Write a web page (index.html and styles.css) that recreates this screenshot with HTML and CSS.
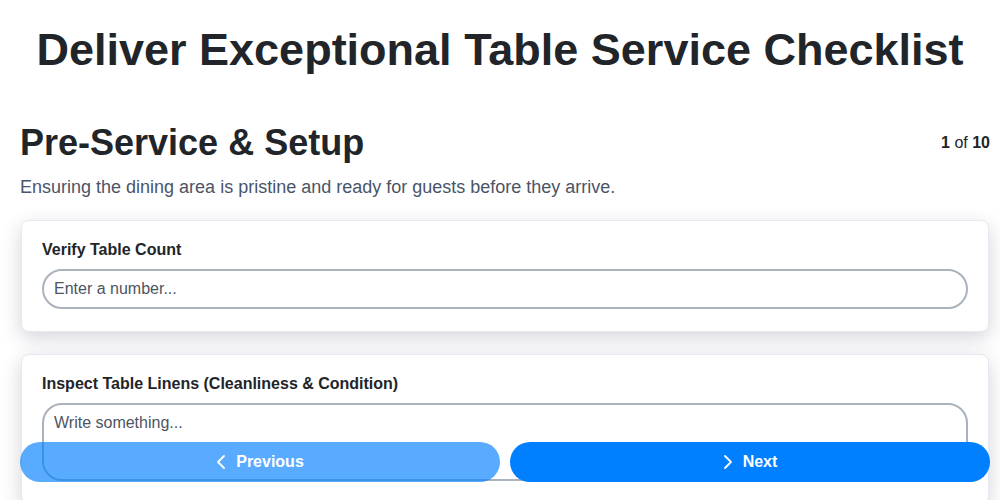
FILE: index.html
```html
<!DOCTYPE html>
<html lang="en">
<head>
<meta charset="utf-8">
<title>Deliver Exceptional Table Service Checklist</title>
<link rel="stylesheet" href="styles.css">
</head>
<body>
<header class="header">
  <h1 class="title">Deliver Exceptional Table Service Checklist</h1>
</header>
<main class="page">
  <div class="section-head">
    <h2 class="section-title">Pre-Service &amp; Setup</h2>
    <div class="progress"><b>1</b> of <b>10</b></div>
  </div>
  <p class="section-desc">Ensuring the dining area is pristine and ready for guests before they arrive.</p>
  <div class="cards">
    <div class="card">
      <label class="field-label">Verify Table Count</label>
      <input class="field-input" type="text" placeholder="Enter a number...">
    </div>
    <div class="card">
      <label class="field-label">Inspect Table Linens (Cleanliness &amp; Condition)</label>
      <textarea class="field-textarea" placeholder="Write something..."></textarea>
    </div>
  </div>
</main>
<div class="nav">
  <button class="btn btn-prev" type="button">
    <svg class="chev" width="10" height="16" viewBox="0 0 10 16"><path d="M8 2 L2 8 L8 14" fill="none" stroke="currentColor" stroke-width="1.8" stroke-linecap="round" stroke-linejoin="round"/></svg>
    <span>Previous</span>
  </button>
  <button class="btn btn-next" type="button">
    <svg class="chev" width="10" height="16" viewBox="0 0 10 16"><path d="M2 2 L8 8 L2 14" fill="none" stroke="currentColor" stroke-width="1.8" stroke-linecap="round" stroke-linejoin="round"/></svg>
    <span>Next</span>
  </button>
</div>
</body>
</html>
```
FILE: styles.css
```css
* { box-sizing: border-box; }
html { scrollbar-width: none; }
html, body { margin: 0; padding: 0; background: #fff; }
body {
  font-family: "Liberation Sans", Arial, sans-serif;
  color: #212529;
}
.header {
  padding: 24px 20px 0;
}
.title {
  margin: 0 0 45px;
  font-size: 45px;
  line-height: 52px;
  font-weight: 700;
  text-align: center;
  color: #212529;
}
.page {
  padding: 0 10px 120px 20px;
}
.section-head {
  display: flex;
  justify-content: space-between;
  align-items: center;
}
.section-title {
  margin: 0;
  font-size: 36px;
  line-height: 44px;
  font-weight: 700;
  color: #212529;
}
.progress {
  font-size: 16px;
  color: #212529;
}
.section-desc {
  margin: 10px 0 21px;
  font-size: 18px;
  line-height: 24px;
  color: #4a5568;
}
.cards {
  display: flex;
  flex-direction: column;
  gap: 22px;
}
.card {
  margin: 0 1px;
  background: #fff;
  border: 1px solid #e8e8f0;
  border-radius: 8px;
  padding: 20px 20px 22px;
  box-shadow: 0 6px 20px rgba(40, 40, 80, 0.2);
}
.field-label {
  display: block;
  font-size: 16px;
  line-height: 18px;
  font-weight: 700;
  color: #212529;
  margin-bottom: 10px;
}
.field-input,
.field-textarea {
  display: block;
  width: 100%;
  font-family: inherit;
  font-size: 16px;
  color: #212529;
  background: #fff;
  border: 2px solid #aab2bb;
  outline: none;
}
.field-input {
  height: 40px;
  border-radius: 20px;
  padding: 0 10px;
}
.field-textarea {
  height: 78px;
  border-radius: 20px;
  padding: 8px 10px;
  resize: none;
  line-height: 20px;
}
.field-input::placeholder,
.field-textarea::placeholder {
  color: #4d5562;
  opacity: 1;
}
.nav {
  position: fixed;
  left: 20px;
  right: 10px;
  bottom: 18px;
  display: flex;
  gap: 10px;
}
.btn {
  flex: 1;
  height: 40px;
  border: none;
  border-radius: 20px;
  background: #007fff;
  color: #fff;
  font-family: inherit;
  font-size: 16px;
  font-weight: 700;
  display: flex;
  align-items: center;
  justify-content: center;
  gap: 10px;
  cursor: pointer;
}
.btn-prev {
  opacity: 0.65;
}
.chev { display: block; }
```
